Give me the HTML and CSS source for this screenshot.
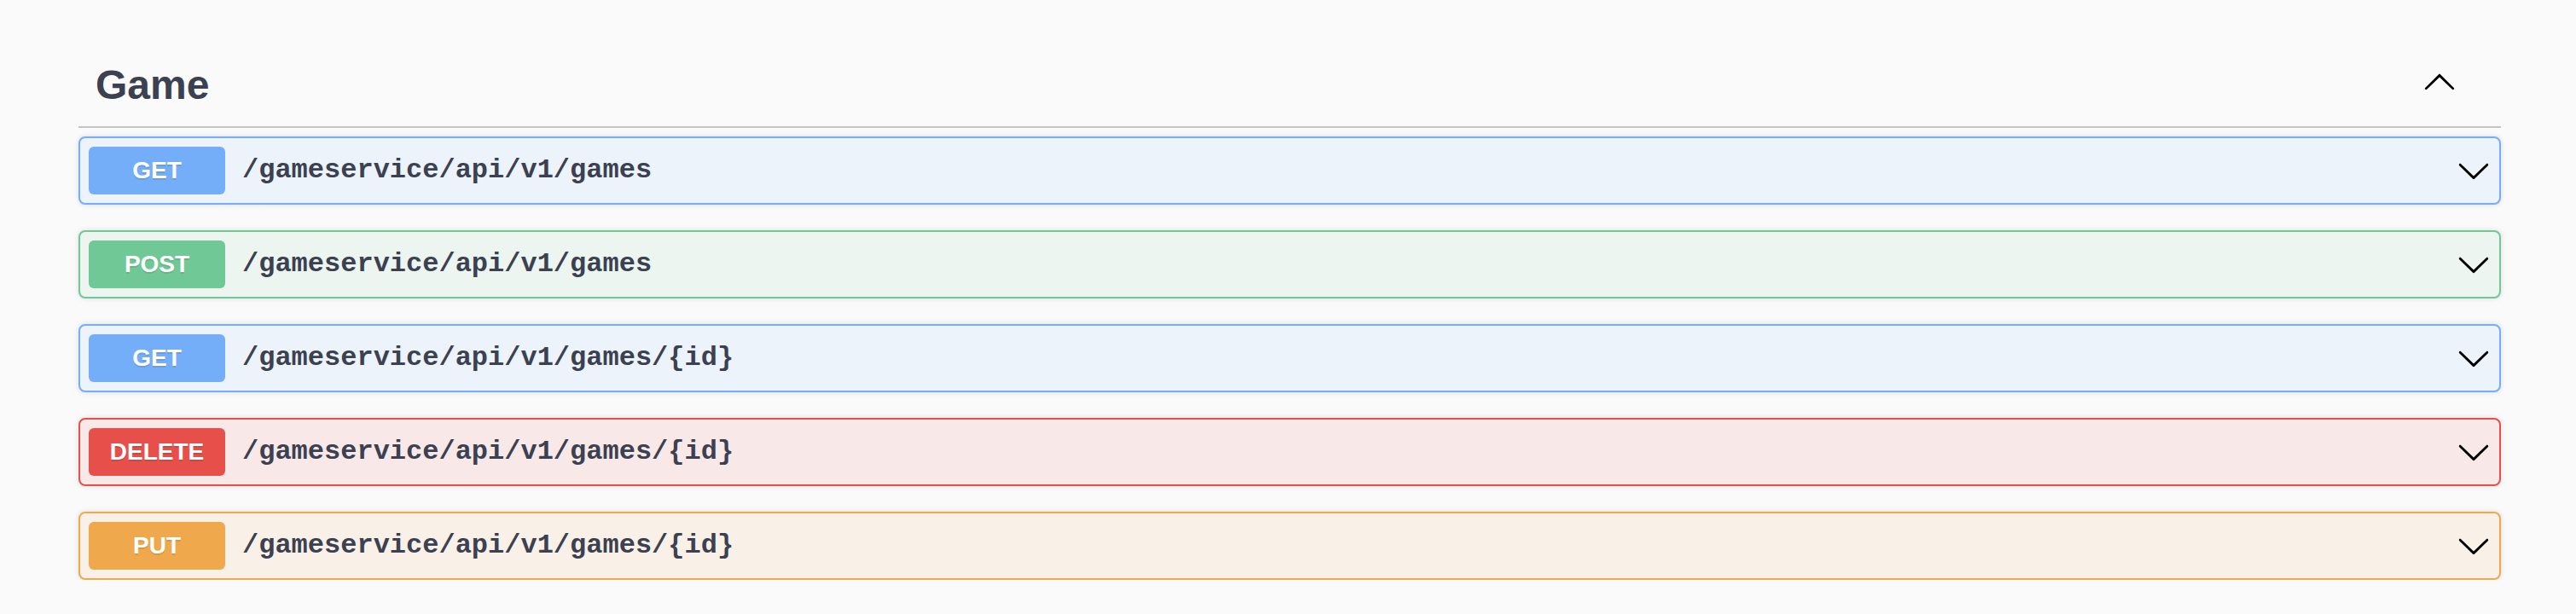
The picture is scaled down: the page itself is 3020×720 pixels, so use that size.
FILE: index.html
```html
<!DOCTYPE html>
<html lang="en">
<head>
<meta charset="utf-8">
<title>Game</title>
<link rel="stylesheet" href="styles.css">
</head>
<body>
<div class="wrapper">
  <section class="tag-section">
    <div class="tag">
      <h3 class="tag-title">Game</h3>
      <svg class="arrow" width="40" height="40" viewBox="0 0 20 20" aria-hidden="true"><path d="M17.418 14.908c.272.268.709.268.979 0s.271-.701 0-.969l-7.908-7.83c-.27-.268-.707-.268-.979 0l-7.908 7.83c-.27.268-.27.701 0 .969.271.268.709.268.979 0L10 7.768l7.418 7.14z"/></svg>
    </div>
    <div class="ops">
      <div class="op op-get">
        <span class="method">GET</span>
        <span class="path">/gameservice/api/v1/games</span>
        <svg class="arrow" width="40" height="40" viewBox="0 0 20 20" aria-hidden="true"><path d="M17.418 6.109c.272-.268.709-.268.979 0s.271.701 0 .969l-7.908 7.83c-.27.268-.707.268-.979 0l-7.908-7.83c-.27-.268-.27-.701 0-.969.271-.268.709-.268.979 0L10 13.25l7.418-7.141z"/></svg>
      </div>
      <div class="op op-post">
        <span class="method">POST</span>
        <span class="path">/gameservice/api/v1/games</span>
        <svg class="arrow" width="40" height="40" viewBox="0 0 20 20" aria-hidden="true"><path d="M17.418 6.109c.272-.268.709-.268.979 0s.271.701 0 .969l-7.908 7.83c-.27.268-.707.268-.979 0l-7.908-7.83c-.27-.268-.27-.701 0-.969.271-.268.709-.268.979 0L10 13.25l7.418-7.141z"/></svg>
      </div>
      <div class="op op-get">
        <span class="method">GET</span>
        <span class="path">/gameservice/api/v1/games/{id}</span>
        <svg class="arrow" width="40" height="40" viewBox="0 0 20 20" aria-hidden="true"><path d="M17.418 6.109c.272-.268.709-.268.979 0s.271.701 0 .969l-7.908 7.83c-.27.268-.707.268-.979 0l-7.908-7.83c-.27-.268-.27-.701 0-.969.271-.268.709-.268.979 0L10 13.25l7.418-7.141z"/></svg>
      </div>
      <div class="op op-delete">
        <span class="method">DELETE</span>
        <span class="path">/gameservice/api/v1/games/{id}</span>
        <svg class="arrow" width="40" height="40" viewBox="0 0 20 20" aria-hidden="true"><path d="M17.418 6.109c.272-.268.709-.268.979 0s.271.701 0 .969l-7.908 7.83c-.27.268-.707.268-.979 0l-7.908-7.83c-.27-.268-.27-.701 0-.969.271-.268.709-.268.979 0L10 13.25l7.418-7.141z"/></svg>
      </div>
      <div class="op op-put">
        <span class="method">PUT</span>
        <span class="path">/gameservice/api/v1/games/{id}</span>
        <svg class="arrow" width="40" height="40" viewBox="0 0 20 20" aria-hidden="true"><path d="M17.418 6.109c.272-.268.709-.268.979 0s.271.701 0 .969l-7.908 7.83c-.27.268-.707.268-.979 0l-7.908-7.83c-.27-.268-.27-.701 0-.969.271-.268.709-.268.979 0L10 13.25l7.418-7.141z"/></svg>
      </div>
    </div>
  </section>
</div>
</body>
</html>
```

FILE: styles.css
```css
html, body {
  margin: 0;
  padding: 0;
  background: #fafafa;
}

body {
  font-family: "Liberation Sans", Arial, sans-serif;
  color: #3b4151;
}

.wrapper {
  margin: 0 88px 0 92px;
  padding-top: 42px;
}

.tag {
  display: flex;
  align-items: center;
  height: 106px;
  padding: 0 52px 0 20px;
  border-bottom: 2px solid #c3c4c8;
  margin-bottom: 10px;
}

.tag-title {
  flex: 1;
  margin: 9px 0 0;
  font-size: 48px;
  font-weight: 700;
  line-height: 1.15;
  color: #3b4151;
}

.arrow {
  display: block;
  flex: none;
  fill: #000;
}

.ops {
  display: flex;
  flex-direction: column;
  gap: 30px;
}

.op {
  display: flex;
  align-items: center;
  padding: 10px;
  border: 2px solid;
  border-radius: 8px;
  box-shadow: 0 0 6px rgba(0, 0, 0, 0.12);
}

.method {
  flex: none;
  width: 160px;
  padding: 12px 0;
  line-height: 32px;
  text-align: center;
  font-family: "Liberation Sans", Arial, sans-serif;
  font-size: 28px;
  font-weight: 700;
  color: #fff;
  border-radius: 6px;
  text-shadow: 0 2px 0 rgba(0, 0, 0, 0.1);
}

.path {
  flex: 1;
  padding: 0 20px;
  font-family: "Liberation Mono", "Courier New", monospace;
  font-size: 32px;
  font-weight: 700;
  line-height: 40px;
  color: #3b4151;
}

.op-get {
  background: #ecf3fb;
  border-color: #74aef8;
}
.op-get .method { background: #74aef8; }

.op-post {
  background: #ecf5f0;
  border-color: #70c896;
}
.op-post .method { background: #70c896; }

.op-delete {
  background: #f8e8e8;
  border-color: #e7504a;
}
.op-delete .method { background: #e7504a; }

.op-put {
  background: #f9f1e8;
  border-color: #efa84b;
}
.op-put .method { background: #efa84b; }
```
